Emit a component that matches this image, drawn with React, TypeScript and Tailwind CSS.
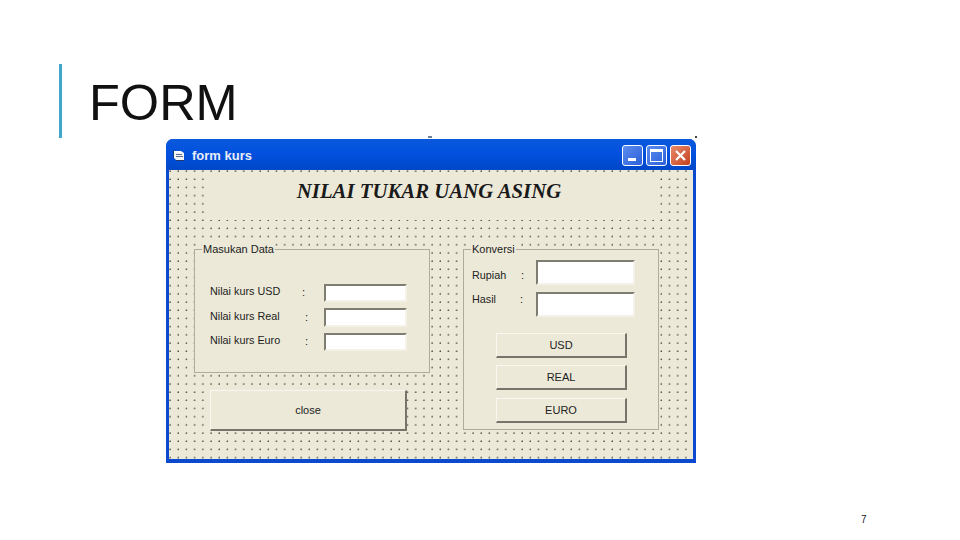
const sans = "font-['Liberation_Sans',Arial,sans-serif]";

function Field({ w, h }: { w: string; h: string }) {
  return (
    <input
      readOnly
      className={`${w} ${h} box-border shrink-0 bg-white border-2 border-t-[#7f7c72] border-l-[#7f7c72] border-r-[#f4f2e8] border-b-[#f4f2e8] outline-none`}
    />
  );
}

function Btn({ label, cls }: { label: string; cls: string }) {
  return (
    <button className={`${cls} box-border flex items-center justify-center bg-[#ece9d8] border border-r-2 border-b-2 border-t-[#f8f7f0] border-l-[#f8f7f0] border-r-[#77756a] border-b-[#77756a] text-[11px] text-[#222]`}>
      {label}
    </button>
  );
}

function KursRow({ label, colon, h, mt }: { label: string; colon: string; h: string; mt: string }) {
  return (
    <div className={`flex items-center ${mt}`}>
      <span className="w-[93px] shrink-0 mb-[3px] text-[10.8px] leading-none whitespace-nowrap text-[#222]">{label}</span>
      <span className={`${colon} shrink-0 mb-[1px] text-[11px] leading-none text-[#222]`}>:</span>
      <Field w="w-[83px]" h={h} />
    </div>
  );
}

function Group({ title, cls, legendCls, children }: { title: string; cls: string; legendCls: string; children: React.ReactNode }) {
  return (
    <fieldset className={`${cls} box-border shrink-0 bg-[#ece9d8] border border-[#aeaca0]`}>
      <legend className={`${legendCls} px-[1px] bg-[#ece9d8] text-[11px] leading-[12px] text-[#222]`}>{title}</legend>
      {children}
    </fieldset>
  );
}

function WinBtn({ bg, children }: { bg: string; children: React.ReactNode }) {
  return (
    <div className={`w-[21px] h-[21px] box-border rounded-[3px] border border-white flex items-center justify-center ${bg}`}>
      {children}
    </div>
  );
}

export default function App() {
  return (
    <div className={`w-[960px] h-[540px] overflow-hidden bg-white flex flex-col ${sans}`}>
      <div className="mt-[64px] ml-[59px] h-[74px] flex items-center border-l-[3px] border-[#41a5cc]">
        <h1 className="ml-[27px] mt-[4px] text-[50.5px] leading-none text-[#111] font-normal">FORM</h1>
      </div>

      <div className="relative mt-[1px] ml-[166px] w-[530px] h-[324px] box-border flex flex-col rounded-t-[7px] bg-[#0a50dc] border-x-[3px] border-b-[4px] border-[#0b49cf]">
        <span className="absolute left-[259px] -top-[3px] w-[4px] h-[2px] bg-[#6b7f95]" />
        <span className="absolute -right-[4px] -top-[3px] w-[2px] h-[2px] bg-[#444]" />

        <div className="h-[31px] shrink-0 flex items-center -mx-[3px] pl-[7px] pr-[5px] rounded-t-[7px] bg-gradient-to-b from-[#0a58dc] via-[#0250de] to-[#0048c8]">
          <svg width="12" height="11" viewBox="0 0 12 11" className="shrink-0 mt-[1px]">
            <path d="M1 1h7l3 2v7H3L1 8z" fill="#f4f4f4" />
            <path d="M1 1h7v2H1z" fill="#fff" />
            <path d="M3 4h6v1H3zM3 6h7v1H3z" fill="#5a6f90" />
            <path d="M0 0h1v8H0zM3 10h8v1H3z" fill="#1f3c70" />
          </svg>
          <span className="ml-[7px] mt-[3px] text-[13px] font-bold text-[#e8edf7]">form kurs</span>
          <div className="ml-auto flex gap-[3px] mt-[1px]">
            <WinBtn bg="bg-gradient-to-br from-[#5d8df0] to-[#2a5fd8]">
              <span className="w-[8px] h-[3px] bg-white mt-[8px] -ml-[1px]" />
            </WinBtn>
            <WinBtn bg="bg-gradient-to-br from-[#5d8df0] to-[#2a5fd8]">
              <span className="w-[13px] h-[13px] box-border border border-t-[3px] border-white" />
            </WinBtn>
            <WinBtn bg="bg-gradient-to-br from-[#e88a6a] to-[#c4401c]">
              <svg width="13" height="13" viewBox="0 0 13 13">
                <path d="M2 2l9 9M11 2l-9 9" stroke="#fff" strokeWidth="2.2" />
              </svg>
            </WinBtn>
          </div>
        </div>

        <div className="flex-1 pl-[25px] bg-[#ece9d8] bg-[radial-gradient(circle_at_1px_1px,#3f3f38_0.5px,transparent_0.85px)] bg-[size:8.2px_8.2px]">
          <div className="mt-[2px] ml-[10px] w-[450px] h-[48px] flex items-center justify-center bg-[#ece9d8]">
            <span className="mb-[10px] font-['Liberation_Serif',serif] italic font-bold text-[20.8px] text-[#1a1a1a] whitespace-nowrap">
              NILAI TUKAR UANG ASING
            </span>
          </div>

          <div className="mt-[23px] flex gap-[33px]">
            <div className="w-[236px] shrink-0">
              <Group title="Masukan Data" cls="w-[236px] h-[130px] pl-[15px]" legendCls="-ml-[8px]">
                <div className="pt-[29px]">
                  <KursRow label="Nilai kurs USD" colon="w-[22px] -ml-[1px]" h="h-[18px]" mt="" />
                  <KursRow label="Nilai kurs Real" colon="w-[21px] pl-[2px]" h="h-[19px]" mt="mt-[6px]" />
                  <KursRow label="Nilai kurs Euro" colon="w-[21px] pl-[2px]" h="h-[18px]" mt="mt-[6px]" />
                </div>
              </Group>
              <Btn label="close" cls="mt-[17px] ml-[16px] w-[197px] h-[41px]" />
            </div>

            <Group title="Konversi" cls="w-[196px] h-[187px]" legendCls="ml-[7px]">
              <div className="pt-[5px] pl-[8px]">
                <div className="flex">
                  <span className="w-[49px] shrink-0 mt-[10px] text-[10.8px] leading-none text-[#222]">Rupiah</span>
                  <span className="w-[15px] shrink-0 mt-[10px] text-[11px] leading-none text-[#222]">:</span>
                  <Field w="w-[99px]" h="h-[25px]" />
                </div>
                <div className="flex mt-[7px]">
                  <span className="w-[48px] shrink-0 mt-[2px] text-[10.8px] leading-none text-[#222]">Hasil</span>
                  <span className="w-[16px] shrink-0 mt-[2px] text-[11px] leading-none text-[#222]">:</span>
                  <Field w="w-[99px]" h="h-[25px]" />
                </div>
              </div>
              <div className="pl-[32px] pt-[16px] flex flex-col gap-[7px]">
                <Btn label="USD" cls="w-[131px] h-[25px]" />
                <Btn label="REAL" cls="w-[131px] h-[25px]" />
                <Btn label="EURO" cls="mt-[1px] w-[131px] h-[25px]" />
              </div>
            </Group>
          </div>
        </div>
      </div>

      <div className="mt-[52px] ml-[861px] text-[10px] leading-none text-[#222]">7</div>
    </div>
  );
}
